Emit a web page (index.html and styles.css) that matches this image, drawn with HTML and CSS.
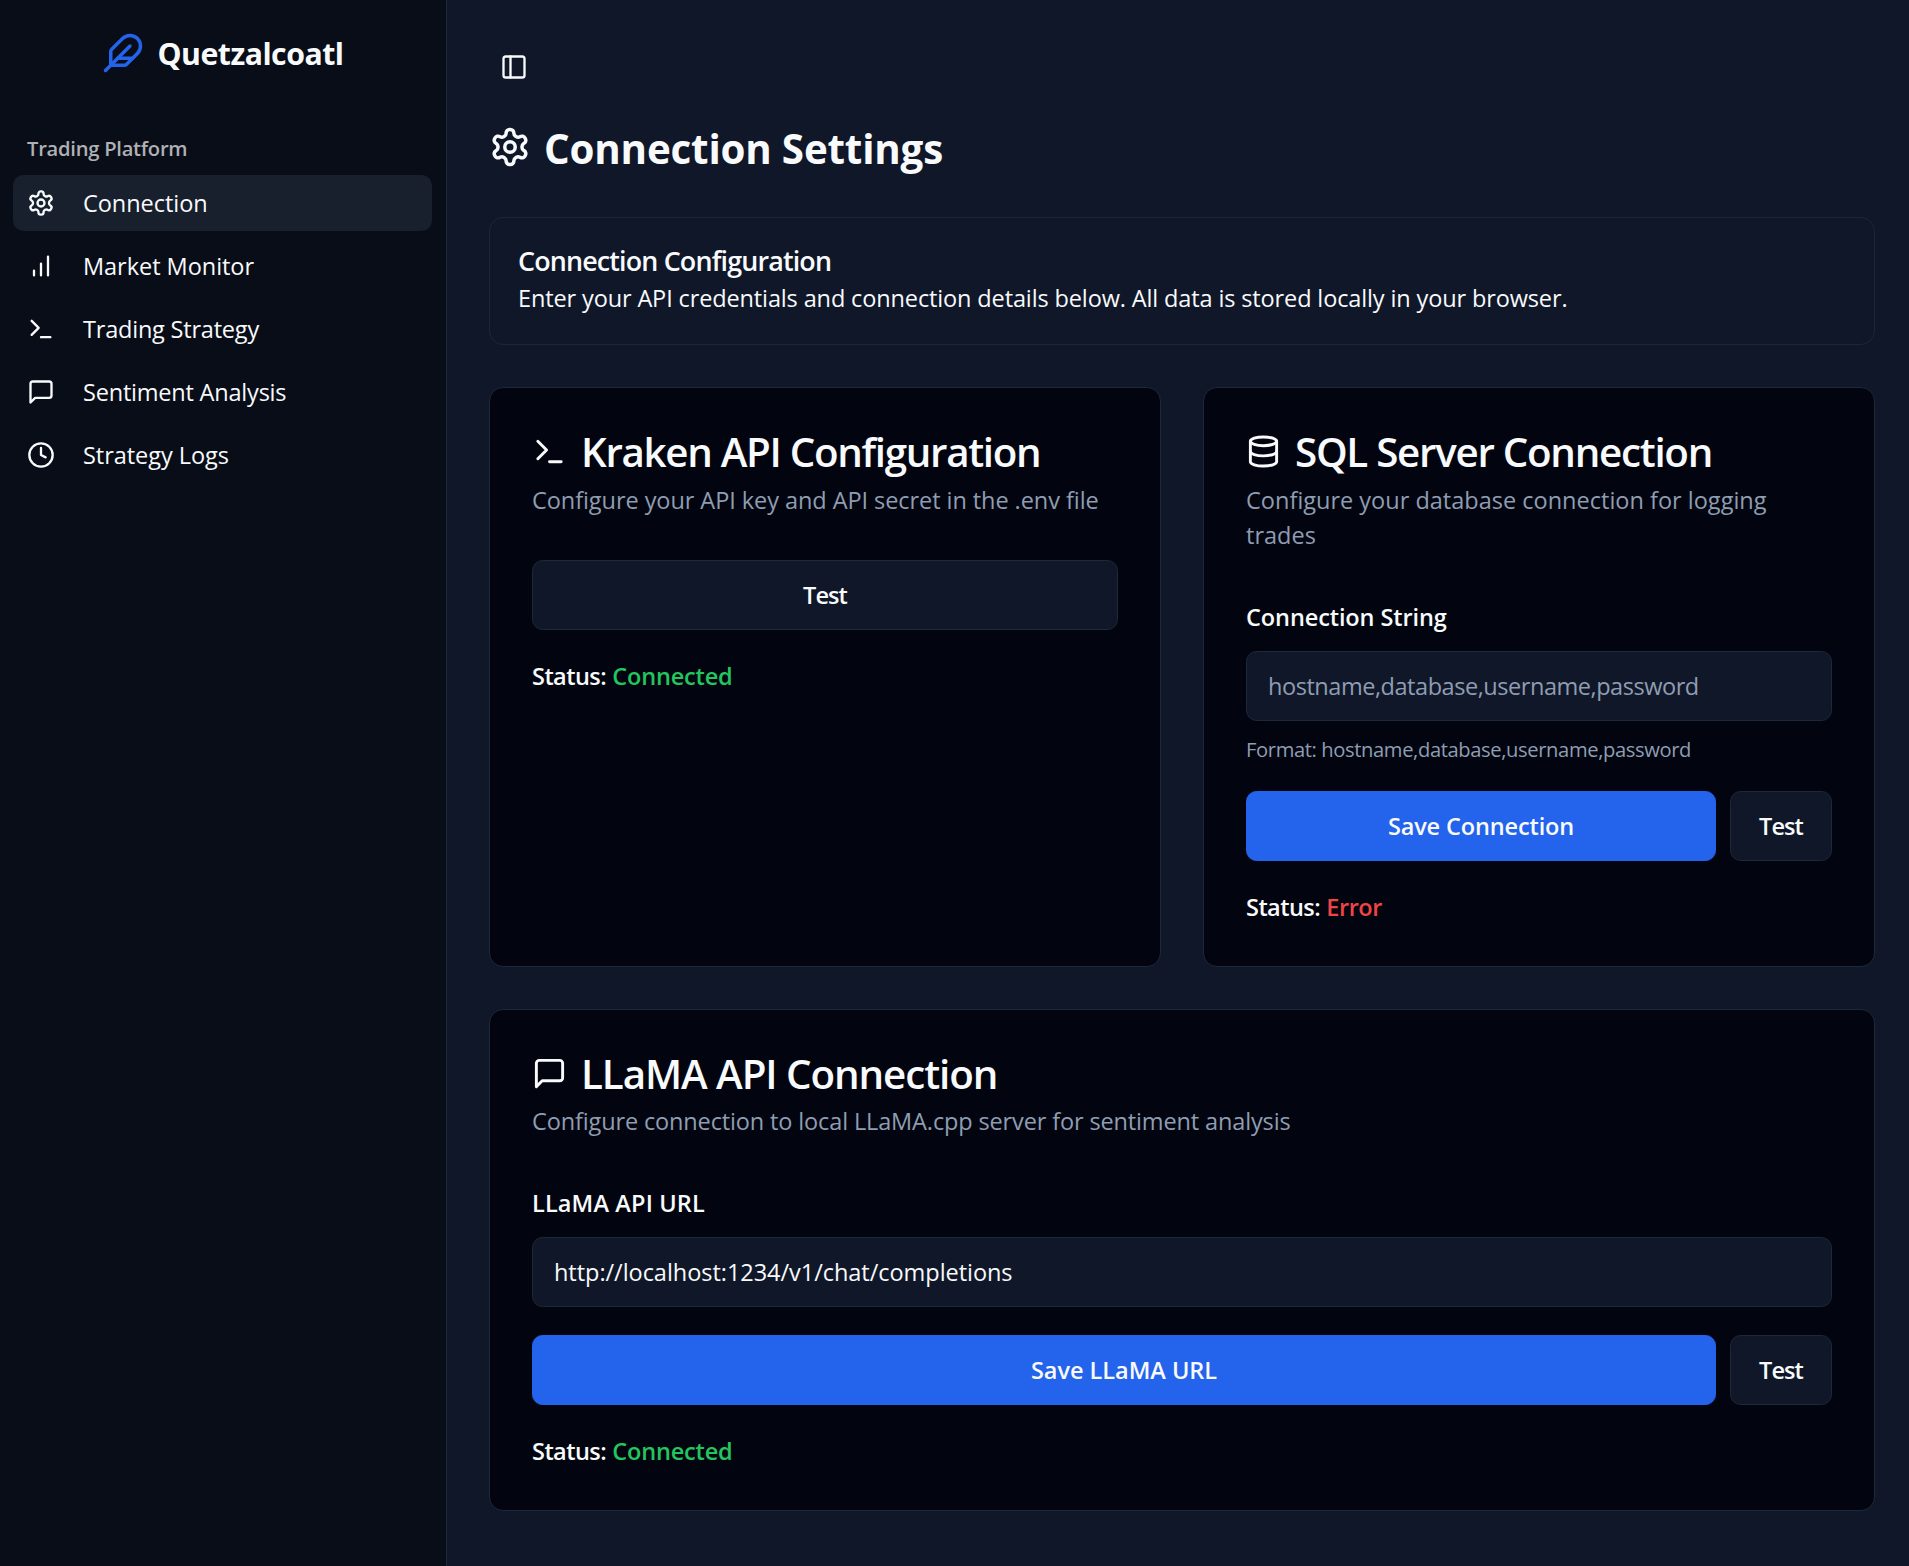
FILE: index.html
```html
<!DOCTYPE html>
<html lang="en">
<head>
<meta charset="utf-8">
<title>Quetzalcoatl</title>
<link rel="stylesheet" href="styles.css">
</head>
<body>
<svg class="sprite" aria-hidden="true">
  <symbol id="feather" viewBox="0 0 24 24"><path d="M12.67 19a2 2 0 0 0 1.416-.588l6.154-6.172a6 6 0 0 0-8.49-8.49L5.586 9.914A2 2 0 0 0 5 11.328V18a1 1 0 0 0 1 1z"/><path d="M16 8 2 22"/><path d="M17.5 15H9"/></symbol>
  <symbol id="settings" viewBox="0 0 24 24"><path d="M12.22 2h-.44a2 2 0 0 0-2 2v.18a2 2 0 0 1-1 1.73l-.43.25a2 2 0 0 1-2 0l-.15-.08a2 2 0 0 0-2.73.73l-.22.38a2 2 0 0 0 .73 2.73l.15.1a2 2 0 0 1 1 1.72v.51a2 2 0 0 1-1 1.74l-.15.09a2 2 0 0 0-.73 2.73l.22.38a2 2 0 0 0 2.73.73l.15-.08a2 2 0 0 1 2 0l.43.25a2 2 0 0 1 1 1.73V20a2 2 0 0 0 2 2h.44a2 2 0 0 0 2-2v-.18a2 2 0 0 1 1-1.73l.43-.25a2 2 0 0 1 2 0l.15.08a2 2 0 0 0 2.73-.73l.22-.39a2 2 0 0 0-.73-2.73l-.15-.08a2 2 0 0 1-1-1.74v-.5a2 2 0 0 1 1-1.74l.15-.09a2 2 0 0 0 .73-2.73l-.22-.38a2 2 0 0 0-2.73-.73l-.15.08a2 2 0 0 1-2 0l-.43-.25a2 2 0 0 1-1-1.73V4a2 2 0 0 0-2-2z"/><circle cx="12" cy="12" r="3"/></symbol>
  <symbol id="bars" viewBox="0 0 24 24"><path d="M12 20V10M18 20V4M6 20v-4"/></symbol>
  <symbol id="terminal" viewBox="0 0 24 24"><path d="m4 17 6-6-6-6M12 19h8"/></symbol>
  <symbol id="message" viewBox="0 0 24 24"><path d="M21 15a2 2 0 0 1-2 2H7l-4 4V5a2 2 0 0 1 2-2h14a2 2 0 0 1 2 2z"/></symbol>
  <symbol id="clock" viewBox="0 0 24 24"><circle cx="12" cy="12" r="10"/><path d="M12 6v6l4 2"/></symbol>
  <symbol id="panel" viewBox="0 0 24 24"><rect x="3" y="3" width="18" height="18" rx="2"/><path d="M9 3v18"/></symbol>
  <symbol id="database" viewBox="0 0 24 24"><ellipse cx="12" cy="5" rx="9" ry="3"/><path d="M3 5v14a9 3 0 0 0 18 0V5"/><path d="M3 12a9 3 0 0 0 18 0"/></symbol>
</svg>

<div class="app">
  <aside class="sidebar">
    <div class="brand">
      <svg class="icon icon-lg brand-icon"><use href="#feather"/></svg>
      <span class="brand-name">Quetzalcoatl</span>
    </div>
    <div class="group-label">Trading Platform</div>
    <nav class="nav">
      <a class="nav-item active"><svg class="icon"><use href="#settings"/></svg><span>Connection</span></a>
      <a class="nav-item"><svg class="icon"><use href="#bars"/></svg><span>Market Monitor</span></a>
      <a class="nav-item snug"><svg class="icon"><use href="#terminal"/></svg><span>Trading Strategy</span></a>
      <a class="nav-item snug"><svg class="icon"><use href="#message"/></svg><span>Sentiment Analysis</span></a>
      <a class="nav-item"><svg class="icon"><use href="#clock"/></svg><span>Strategy Logs</span></a>
    </nav>
  </aside>

  <main class="main">
    <button class="trigger" aria-label="Toggle Sidebar"><svg class="icon"><use href="#panel"/></svg></button>
    <h1 class="page-title"><svg class="icon icon-lg"><use href="#settings"/></svg><span>Connection Settings</span></h1>

    <section class="alert">
      <h5 class="alert-title">Connection Configuration</h5>
      <div class="alert-text">Enter your API credentials and connection details below. All data is stored locally in your browser.</div>
    </section>

    <div class="grid">
      <section class="card kraken">
        <h3 class="card-title"><svg class="icon icon-md"><use href="#terminal"/></svg><span>Kraken API Configuration</span></h3>
        <p class="card-desc">Configure your API key and API secret in the .env file</p>
        <div class="row"><button class="btn grow short">Test</button></div>
        <p class="status"><span class="key">Status:</span> <span class="ok">Connected</span></p>
      </section>

      <section class="card sql">
        <h3 class="card-title"><svg class="icon icon-md"><use href="#database"/></svg><span>SQL Server Connection</span></h3>
        <p class="card-desc">Configure your database connection for logging trades</p>
        <label class="label">Connection String</label>
        <div class="field placeholder">hostname,database,username,password</div>
        <p class="hint">Format: hostname,database,username,password</p>
        <div class="row"><button class="btn primary grow">Save Connection</button><button class="btn short">Test</button></div>
        <p class="status"><span class="key">Status:</span> <span class="error">Error</span></p>
      </section>

      <section class="card llama">
        <h3 class="card-title"><svg class="icon icon-md"><use href="#message"/></svg><span>LLaMA API Connection</span></h3>
        <p class="card-desc">Configure connection to local LLaMA.cpp server for sentiment analysis</p>
        <label class="label">LLaMA API URL</label>
        <div class="field">http://localhost:1234/v1/chat/completions</div>
        <div class="row"><button class="btn primary grow">Save LLaMA URL</button><button class="btn short">Test</button></div>
        <p class="status"><span class="key">Status:</span> <span class="ok">Connected</span></p>
      </section>
    </div>
  </main>
</div>
</body>
</html>
```
FILE: styles.css
```css
:root {
  --background: #101728;
  --sidebar: #090d18;
  --card: #02050f;
  --border: #1d283a;
  --foreground: #f8fafc;
  --muted: #8f9db2;
  --primary: #2463eb;
}

* { box-sizing: border-box; margin: 0; }

body {
  background: var(--background);
  color: var(--foreground);
  font: 400 23.52px/35px "Open Sans", "Noto Sans", sans-serif;
}

.sprite { display: none; }

.icon {
  width: 28px;
  height: 28px;
  flex: none;
  fill: none;
  stroke: currentColor;
  stroke-width: 2;
  stroke-linecap: round;
  stroke-linejoin: round;
}
.icon-md { width: 35px; height: 35px; }
.icon-lg { width: 42px; height: 42px; }

.app { display: flex; min-height: 1566px; }

/* Sidebar */
.sidebar {
  width: 447px;
  flex: none;
  background: var(--sidebar);
  border-right: 1px solid var(--border);
  padding: 28px 14px 0 13px;
}
.brand {
  display: flex;
  justify-content: center;
  gap: 14px;
  height: 49px;
  padding-top: 3.5px;
}
.brand-icon { color: var(--primary); }
.brand-name {
  font-size: 30.24px;
  font-weight: 700;
  line-height: 44px;
  letter-spacing: -0.0167em;
}
.group-label {
  margin-top: 43px;
  height: 56px;
  padding-left: 14px;
  font-size: 20.16px;
  font-weight: 600;
  line-height: 56px;
  letter-spacing: -0.0125em;
  color: #afb1b5;
}
.nav { display: flex; flex-direction: column; gap: 7px; margin-top: -1px; }
.nav-item {
  display: flex;
  align-items: center;
  gap: 28px;
  height: 56px;
  padding-left: 14px;
  border-radius: 10.5px;
  letter-spacing: -0.002em;
}
.nav-item span { padding-top: 1px; }
.nav-item.active { background: #18202d; }
.nav-item.snug { letter-spacing: -0.009em; }

/* Main column */
.main { flex: 1; padding: 42px 34px 0 42px; }
.trigger {
  display: flex;
  align-items: center;
  justify-content: center;
  width: 49px;
  height: 49px;
  padding: 0;
  border: 0;
  background: none;
  color: inherit;
}
.page-title {
  display: flex;
  gap: 13px;
  height: 49px;
  margin-top: 32px;
  font-size: 40.32px;
  font-weight: 700;
  line-height: 52px;
  letter-spacing: -0.0046em;
}
.page-title .icon { margin-top: 3px; }

.alert {
  height: 128px;
  margin-top: 45px;
  padding: 28px;
  border: 1px solid #1b2737;
  border-radius: 14px;
}
.alert-title {
  height: 35px;
  font-size: 26.88px;
  font-weight: 600;
  line-height: 30px;
  letter-spacing: -0.0315em;
}
.alert-text { letter-spacing: -0.0057em; }

.grid {
  display: grid;
  grid-template-columns: 1fr 1fr;
  gap: 42px;
  margin-top: 42px;
}
.card {
  background: var(--card);
  border: 1px solid var(--border);
  border-radius: 14px;
  padding: 42px;
}
.card-title {
  display: flex;
  gap: 14px;
  height: 42px;
  font-size: 40.32px;
  font-weight: 600;
  line-height: 43px;
}
.card-title .icon { margin-top: 3.5px; }
.card-desc { margin: 11px 0 42px; color: var(--muted); }

.llama { grid-column: 1 / -1; }
.llama .card-desc { margin-top: 10px; letter-spacing: -0.006em; }
.kraken .card-desc { letter-spacing: -0.003em; }
.kraken .card-title { letter-spacing: -0.0325em; }
.sql .card-title { letter-spacing: -0.0315em; }
.llama .card-title { letter-spacing: -0.0265em; }

.label {
  display: block;
  height: 56px;
  font-weight: 600;
  line-height: 44px;
  letter-spacing: -0.0045em;
}
.llama .label { letter-spacing: 0.006em; }
.field {
  height: 70px;
  padding: 0 21px;
  border: 1px solid var(--border);
  border-radius: 10.5px;
  background: var(--background);
  line-height: 69px;
  letter-spacing: -0.002em;
}
.field.placeholder { color: var(--muted); letter-spacing: -0.0195em; }
.hint {
  height: 28px;
  margin-top: 14px;
  font-size: 20.16px;
  line-height: 29px;
  letter-spacing: -0.0188em;
  color: var(--muted);
}
.row { display: flex; gap: 14px; margin-top: 28px; }
.card-desc + .row { margin-top: 0; }
.btn {
  height: 70px;
  padding: 0 28px;
  border: 1px solid var(--border);
  border-radius: 10.5px;
  background: var(--background);
  color: inherit;
  font: inherit;
  font-weight: 600;
  letter-spacing: -0.006em;
}
.btn.short { letter-spacing: -0.0382em; }
.btn.primary { background: var(--primary); border-color: var(--primary); }
.llama .btn.primary { letter-spacing: -0.001em; }
.grow { flex: 1; }

.status { height: 35px; margin-top: 28px; font-weight: 600; line-height: 36px; }
.status .key { letter-spacing: -0.0235em; }
.ok { color: #22c55e; letter-spacing: -0.0075em; }
.error { color: #ef4444; letter-spacing: -0.0185em; }
```
